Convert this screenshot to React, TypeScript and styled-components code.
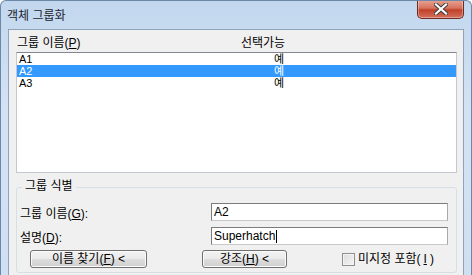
import styled, { createGlobalStyle } from "styled-components";

const GlobalStyle = createGlobalStyle`
  html, body {
    margin: 0;
    padding: 0;
    width: 472px;
    height: 275px;
    overflow: hidden;
    background: #ffffff;
  }
  * {
    box-sizing: border-box;
  }
`;

const Window = styled.div`
  width: 472px;
  height: 275px;
  display: flex;
  flex-direction: column;
  background: linear-gradient(180deg, #c2d7ee 0%, #d3e3f4 40%, #cfe0f2 100%);
  border: 1px solid #6c87a8;
  border-bottom: none;
  border-radius: 6px 6px 0 0;
  font-family: "Liberation Sans", "Noto Sans CJK KR", sans-serif;
  font-size: 12px;
  color: #000;
  overflow: hidden;
`;

const TitleBar = styled.div`
  height: 28px;
  flex: none;
  display: flex;
  align-items: flex-start;
  justify-content: space-between;
  padding-left: 6px;
`;

const Title = styled.span`
  margin-top: 8px;
  line-height: 14px;
  color: #1b2330;
`;

const CloseButton = styled.div`
  width: 47px;
  height: 19px;
  margin-right: 7px;
  margin-top: -1px;
  display: flex;
  align-items: center;
  justify-content: center;
  border: 1px solid #6e2a22;
  border-top: none;
  border-radius: 0 0 5px 5px;
  background: linear-gradient(180deg, #e8a493 0%, #d5735d 45%, #c1412a 55%, #d3705a 100%);
  box-shadow: inset 0 0 0 1px rgba(255, 255, 255, 0.35);
`;

const Client = styled.div`
  flex: 1;
  margin: 0 7px 0 7px;
  background: #f0f0f0;
  border: 1px solid #8fa3bc;
  border-bottom: none;
  padding: 1px 6px 0 7px;
  display: flex;
  flex-direction: column;
`;

const ListHeader = styled.div`
  height: 20px;
  display: grid;
  grid-template-columns: 224px 1fr;
  align-items: center;
  padding-left: 1px;
`;

const ListBox = styled.div`
  margin-top: 1px;
  height: 121px;
  background: #ffffff;
  border: 1px solid #c3c8d0;
  border-top-color: #828790;
  display: flex;
  flex-direction: column;
`;

const Row = styled.div<{ $selected?: boolean }>`
  height: 12px;
  line-height: 12px;
  font-size: 11px;
  overflow: hidden;
  display: grid;
  grid-template-columns: 255px 1fr;
  padding-left: 2px;
  background: ${(p) => (p.$selected ? "#3399ff" : "transparent")};
  color: ${(p) => (p.$selected ? "#ffffff" : "#000000")};
`;

const GroupBox = styled.div`
  position: relative;
  margin-top: 14px;
  height: 86px;
  border: 1px solid #d5dfe5;
  border-radius: 3px;
  padding: 15px 8px 0 3px;
  display: flex;
  flex-direction: column;
`;

const GroupLabel = styled.span`
  position: absolute;
  top: -9px;
  left: 5px;
  padding: 0 3px;
  background: #f0f0f0;
  line-height: 14px;
`;

const FieldRow = styled.div<{ $gap?: number }>`
  display: grid;
  grid-template-columns: 191px 1fr;
  align-items: center;
  height: 18px;
  margin-bottom: ${(p) => p.$gap ?? 0}px;
`;

const TextBox = styled.div`
  height: 18px;
  border: 1px solid #7c7c7c;
  border-right-color: #a9a9a9;
  border-bottom-color: #c9c9c9;
  background: #ffffff;
  padding-left: 2px;
  line-height: 16px;
  display: flex;
  align-items: center;
`;

const Caret = styled.span`
  width: 1px;
  height: 13px;
  background: #000;
  margin-left: 1px;
`;

const ButtonRow = styled.div`
  display: flex;
  align-items: center;
  gap: 55px;
  padding-left: 10px;
`;

const PushButton = styled.div<{ $width: number }>`
  width: ${(p) => p.$width}px;
  height: 18px;
  display: flex;
  align-items: center;
  justify-content: center;
  border: 1px solid #707070;
  border-radius: 3px;
  background: linear-gradient(180deg, #f2f2f2 0%, #ebebeb 48%, #dddddd 52%, #cfcfcf 100%);
  box-shadow: inset 0 0 0 1px #fbfbfb;
  line-height: 14px;
`;

const CheckLabel = styled.label`
  display: flex;
  align-items: center;
  gap: 3px;
  line-height: 14px;
`;

const CheckBox = styled.span`
  width: 13px;
  height: 13px;
  border: 1px solid #8f8f8f;
  background: linear-gradient(135deg, #dcdcdc 0%, #f4f4f4 100%);
  box-shadow: inset 0 0 0 1px #f4f4f4;
`;

function App() {
  return (
    <>
      <GlobalStyle />
      <Window>
        <TitleBar>
          <Title>객체 그룹화</Title>
          <CloseButton>
            <svg width="14" height="12" viewBox="0 0 14 12">
              <path d="M2 1.5 L12 10.5 M12 1.5 L2 10.5" stroke="#3a3a3a" strokeWidth="4" strokeLinecap="square" />
              <path d="M2 1.5 L12 10.5 M12 1.5 L2 10.5" stroke="#ffffff" strokeWidth="2.2" strokeLinecap="square" />
            </svg>
          </CloseButton>
        </TitleBar>
        <Client>
          <ListHeader>
            <span>
              그룹 이름(<u>P</u>)
            </span>
            <span>선택가능</span>
          </ListHeader>
          <ListBox>
            <Row>
              <span>A1</span>
              <span>예</span>
            </Row>
            <Row $selected>
              <span>A2</span>
              <span>예</span>
            </Row>
            <Row>
              <span>A3</span>
              <span>예</span>
            </Row>
          </ListBox>
          <GroupBox>
            <GroupLabel>그룹 식별</GroupLabel>
            <FieldRow $gap={6}>
              <span>
                그룹 이름(<u>G</u>):
              </span>
              <TextBox>A2</TextBox>
            </FieldRow>
            <FieldRow $gap={5}>
              <span>
                설명(<u>D</u>):
              </span>
              <TextBox>
                Superhatch
                <Caret />
              </TextBox>
            </FieldRow>
            <ButtonRow>
              <PushButton $width={117}>
                이름 찾기(<u>F</u>) &lt;
              </PushButton>
              <PushButton $width={85}>
                강조(<u>H</u>) &lt;
              </PushButton>
              <CheckLabel>
                <CheckBox />
                미지정 포함(<u>I</u>)
              </CheckLabel>
            </ButtonRow>
          </GroupBox>
        </Client>
      </Window>
    </>
  );
}

export default App;
